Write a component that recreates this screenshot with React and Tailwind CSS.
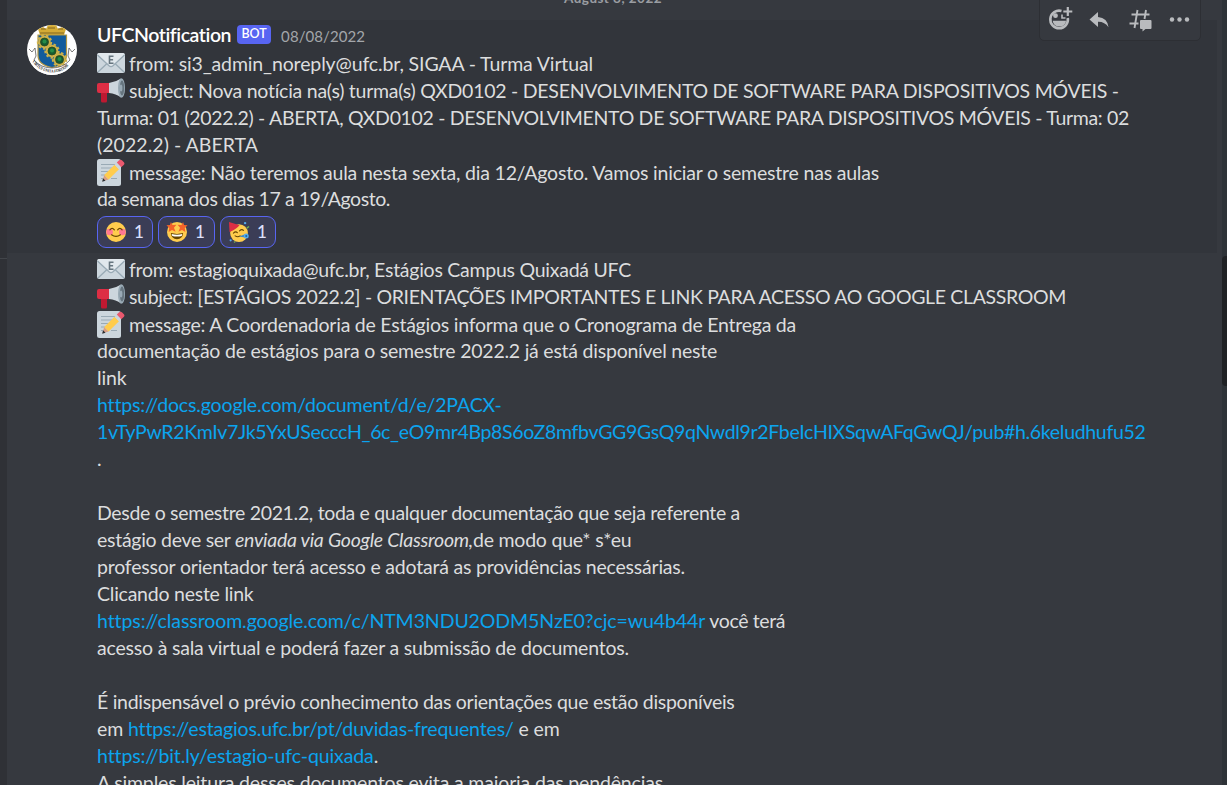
import { useLayoutEffect, useRef } from "react";

/* Text run whose tracking is adjusted so that it spans `w` pixels. */
function T({ w, children, className = "" }) {
  const ref = useRef(null);
  useLayoutEffect(() => {
    const el = ref.current;
    el.style.letterSpacing = "0px";
    const natural = el.getBoundingClientRect().width;
    el.style.letterSpacing = (w - natural) / children.length + "px";
  }, [w, children]);
  return <span ref={ref} className={"inline-block whitespace-pre " + className}>{children}</span>;
}

const Link = ({ w, children }) => (
  <a className="text-[#0ba4ee]"><T w={w}>{children}</T></a>
);

const Line = ({ children }) => <div className="h-[27px] leading-[25px] whitespace-pre flex">{children}</div>;

function Envelope() {
  return (
    <svg viewBox="0 0 28 20" className="w-[28px] h-[20px] mt-[2px] mr-[4px] shrink-0">
      <rect width="28" height="20" rx="2" fill="#ccd6dd" />
      <path d="M1 19 10.500 10M27 19 17.500 10" stroke="#99aab5" strokeWidth="1.300" />
      <path d="M.5 1.500 12 12.500q2 1.700 4 0L27.500 1.500Q27 0 26 0H2Q1 0 .5 1.500Z" fill="#e1e8ed" />
      <path d="M.5 2 12 12.800q2 1.700 4 0L27.500 2" fill="none" stroke="#99aab5" strokeWidth="1.300" />
      <path d="M16.500 3.200h-4v7h4M12.500 6.700h3.600" fill="none" stroke="#66757f" strokeWidth="1.600" />
    </svg>
  );
}

function Megaphone() {
  return (
    <svg viewBox="0 0 28 25" className="w-[28px] h-[25px] mr-[4px] shrink-0">
      <path d="M4 13h6v10q0 1.500-1.500 1.500h-3Q4 24.500 4 23Z" fill="#be1931" />
      <path d="M2 5h11v10H2q-2 0-2-2V7q0-2 2-2Z" fill="#dd2e44" />
      <path d="M12 5Q19 4 24 .5v19Q19 15.500 12 15Z" fill="#ccd6dd" />
      <ellipse cx="24.500" cy="10" rx="3.500" ry="9.800" fill="#99aab5" />
      <ellipse cx="25" cy="10" rx="2.200" ry="7.500" fill="#66757f" />
      <ellipse cx="24" cy="10" rx="1.400" ry="3.500" fill="#99aab5" />
    </svg>
  );
}

function Memo() {
  return (
    <svg viewBox="0 0 28 27" className="w-[28px] h-[27px] mr-[4px] shrink-0">
      <rect y="0" width="24" height="27" rx="2.500" fill="#ccd6dd" />
      <path d="M4 5.500h15M4 9h12M4 12.500h8M4 16h4M4 19.500h2M14 19.500h6" stroke="#99aab5" strokeWidth="1.200" />
      <path d="m5.500 22.300 1.700-6.400 4.400 4.600Z" fill="#d99e82" />
      <path d="m7.200 15.900 10.400-10.200 4.400 4.600-10.400 10.200Z" fill="#ffcc4d" />
      <path d="m17.600 5.700 2.200-2.100 4.400 4.600-2.200 2.100Z" fill="#ccd6dd" />
      <path d="m19.800 3.600 2.300-2.300q1.300-1.300 2.800 0l2 2q1.200 1.400-.2 2.700l-2.500 2.200Z" fill="#ea596e" />
      <path d="m5.200 22.700.9-3.500 2.400 2.500Z" fill="#292f33" />
    </svg>
  );
}

function Smile() {
  return (
    <svg viewBox="0 0 36 36" className="size-[20px]">
      <circle cx="18" cy="18" r="18" fill="#ffcc4d" />
      <circle cx="6.500" cy="18" r="6" fill="#ff7892" />
      <circle cx="29.500" cy="18" r="6" fill="#ff7892" />
      <path d="M7 14q4-5 8 0M21 14q4-5 8 0M10 23q8 6 16 0" fill="none" stroke="#664500" strokeWidth="2.200" strokeLinecap="round" />
    </svg>
  );
}

function StarEyes() {
  return (
    <svg viewBox="0 0 36 36" className="size-[20px] overflow-visible">
      <circle cx="18" cy="18" r="18" fill="#ffcc4d" />
      <path d="M7 20q11 3 22 0-1 11-11 11T7 20Z" fill="#664500" />
      <path d="M8.500 21.500q9.500 2.500 19 0l-1 3.500q-8.500 2-17 0Z" fill="#fff" />
      <path d="m7 0 3 5.500 7-.5-4.500 5.500 3 7L9 14.500 3 18l1-7-5-5 6.500-.5ZM29 0l-3 5.500-7-.5 4.500 5.500-3 7 6.500-3 6 3.500-1-7 5-5-6.500-.5Z" fill="#f4632a" />
    </svg>
  );
}

function Party() {
  return (
    <svg viewBox="0 0 36 36" className="size-[20px] overflow-visible">
      <circle cx="18" cy="20" r="16" fill="#ffcc4d" />
      <path d="M0 0 19 6Q14 13 1 18Z" fill="#dd2e44" />
      <path d="M8 20q4-4 7-1M19 16q4-4 7-1M11 25q5 3 9 0" fill="none" stroke="#664500" strokeWidth="2" strokeLinecap="round" />
      <path d="m18 26 11-4v6Z" fill="#3b88c3" />
      <circle cx="31" cy="25" r="4.500" fill="#55acee" />
      <circle cx="31" cy="25" r="1.800" fill="#269" />
      <circle cx="29" cy="2" r="2.200" fill="#55acee" />
      <path d="m32 11 4-3" stroke="#77b255" strokeWidth="2.500" />
      <circle cx="3" cy="33" r="2" fill="#55acee" />
      <circle cx="10" cy="36" r="1.500" fill="#77b255" />
    </svg>
  );
}

const Reaction = ({ children, className }) => (
  <div className={"h-[32px] box-border border border-[#5865f2] rounded-[9px] bg-[#3b3d56] flex items-center pl-[8px] text-[17px] text-[#dee0fc] font-medium " + className}>
    {children}<span className="ml-[8px]">1</span>
  </div>
);

function Crest() {
  return (
    <svg viewBox="0 0 50 50" className="w-[50px] h-[50px] shrink-0">
      <defs><clipPath id="disc"><circle cx="25" cy="25" r="25" /></clipPath></defs>
      <g clipPath="url(#disc)">
        <rect width="50" height="50" fill="#fefefe" />
        <path d="M13 10 11 4l5-2 3 2 2-4h8l2 4 4-2 4 2-2 6Z" fill="#d4ab35" />
        <path d="M14 4h5M21 3h7M31 4h5M13 8h24" stroke="#806421" strokeWidth="1" />
        <path d="M11 10h28.500V30q0 10-14.500 12.500Q11 40 11 30Z" fill="#125b9c" stroke="#b29745" strokeWidth="1.200" />
        <g fill="#cdb14a"><circle cx="17.500" cy="17" r="6.200" /><circle cx="25" cy="26" r="6.200" /><circle cx="32.500" cy="34.500" r="6.200" /></g>
        <g fill="none" stroke="#cdb14a" strokeWidth="2" strokeDasharray="2.500 2.200"><circle cx="17.500" cy="17" r="6.700" /><circle cx="25" cy="26" r="6.700" /><circle cx="32.500" cy="34.500" r="6.700" /></g>
        <g fill="#165c31" stroke="#284721" strokeWidth=".8"><circle cx="17.500" cy="17" r="4" /><circle cx="25" cy="26" r="4" /><circle cx="32.500" cy="34.500" r="4" /></g>
        <g fill="#268c47"><circle cx="17.500" cy="16.500" r="2" /><circle cx="25" cy="25.500" r="2" /><circle cx="32.500" cy="34" r="2" /></g>
        <path d="m2 24 3 3 3-4 1 8-2 4q7 8 18 8t18-8l-2-4 1-8 3 4 3-3-1 10 3 4q-8 13-25 13T0 38l3-4Z" fill="#fff" />
        <path d="m2 24 3 3 3-4 1 8-2 4q7 8 18 8t18-8l-2-4 1-8 3 4 3-3" fill="none" stroke="#444" strokeWidth=".7" />
        <path id="motto" d="M5 36.500Q13 47 25 47.500T45 36.500" fill="none" />
        <text fontSize="4.400" fontFamily="Liberation Serif, serif" fontWeight="bold" fill="#222"><textPath href="#motto" textLength="42" lengthAdjust="spacingAndGlyphs">VIRTUS UNITA FORTIOR</textPath></text>
      </g>
    </svg>
  );
}

function Toolbar() {
  return (
    <div className="absolute left-[1039px] -top-px w-[162px] h-[42px] rounded-b-[5px] border border-[#2d2f34] bg-[#36393f] text-[#b9bbbe]">
      <svg viewBox="0 0 160 40" className="w-[160px] h-[40px]" fill="none" stroke="currentColor">
        <path d="M21.500 11A8.800 8.800 0 1 0 27.800 18" strokeWidth="2.600" />
        <path d="M12.700 20.800h13.400q-.7 5.800-6.700 5.800t-6.700-5.800Z" fill="currentColor" stroke="none" />
        <circle cx="15.500" cy="15.700" r="2.400" fill="currentColor" stroke="none" />
        <path d="M22 14.500v3.500h3.500" strokeWidth="1.600" />
        <path d="M27.800 7v9M23.300 11.500h9" strokeWidth="2.200" />
        <path d="M58 17V12l-8.500 7.500 8.500 7.500v-5.200q6.700-.2 10.500 5.500-1-9.500-10.500-10.300Z" fill="currentColor" stroke="none" />
        <path d="M91.500 14.500h18M89.500 23.500h9M97.500 10l-3 18M106 10l-1.500 9" strokeWidth="1.900" />
        <path d="M101 20h9.500q1 0 1 1v7q0 1-1 1h-5l-3 2.500V29h-1.500q-1 0-1-1v-7q0-1 1-1Z" fill="currentColor" stroke="none" />
        <g fill="currentColor" stroke="none"><circle cx="132" cy="19.500" r="2.200" /><circle cx="139.500" cy="19.500" r="2.200" /><circle cx="147" cy="19.500" r="2.200" /></g>
      </svg>
    </div>
  );
}

export default function App() {
  return (
    <div className="relative w-[1227px] h-[785px] overflow-hidden flex bg-[#36393f] text-[#dcddde] text-[19.5px] font-['Lato',sans-serif]">
      <div className="w-[7px] shrink-0 bg-[#2f3136] pt-[258px]"><div className="h-px bg-[#42454a]" /></div>
      <main className="w-[1215px] shrink-0 flex flex-col">
        <div className="h-[20px] relative shrink-0">
          <div className="absolute left-[557px] -top-[11px] text-[13.5px] leading-[18px] font-bold text-[#9a9da2]"><T w={98}>August 8, 2022</T></div>
        </div>
        <section className="h-[233px] w-[1210px] shrink-0 bg-[#32353b] flex pl-[20px] pt-[5px]">
          <Crest />
          <div className="ml-[20px]">
            <div className="flex items-center h-[26px] -mt-[3px] mb-[3px]">
              <T w={134.500} className="font-semibold text-white leading-[27px] -mt-px">UFCNotification</T>
              <span className="ml-[6px] w-[34px] h-[19px] -mt-px rounded-[4px] bg-[#5865f2] text-white text-[12.5px] leading-[18px] font-semibold text-center">BOT</span>
              <span className="ml-[10px] mt-[3px] text-[15px] text-[#a3a6aa]"><T w={84}>08/08/2022</T></span>
            </div>
            <Line><Envelope /><T w={464}>from: si3_admin_noreply@ufc.br, SIGAA - Turma Virtual</T></Line>
            <Line><Megaphone /><T w={990}>subject: Nova notícia na(s) turma(s) QXD0102 - DESENVOLVIMENTO DE SOFTWARE PARA DISPOSITIVOS MÓVEIS -</T></Line>
            <Line><T w={1032}>Turma: 01 (2022.2) - ABERTA, QXD0102 - DESENVOLVIMENTO DE SOFTWARE PARA DISPOSITIVOS MÓVEIS - Turma: 02</T></Line>
            <Line><T w={161}>(2022.2) - ABERTA</T></Line>
            <Line><Memo /><T w={750} className="pt-px">message: Não teremos aula nesta sexta, dia 12/Agosto. Vamos iniciar o semestre nas aulas</T></Line>
            <Line><T w={293}>da semana dos dias 17 a 19/Agosto.</T></Line>
            <div className="flex mt-[3px]">
              <Reaction className="w-[56px]"><Smile /></Reaction>
              <Reaction className="w-[57px] ml-[5px]"><StarEyes /></Reaction>
              <Reaction className="w-[56px] ml-[5px]"><Party /></Reaction>
            </div>
          </div>
        </section>
        <section className="pl-[90px] pt-[4px]">
          <Line><Envelope /><T w={502}>from: estagioquixada@ufc.br, Estágios Campus Quixadá UFC</T></Line>
          <Line><Megaphone /><T w={937}>subject: [ESTÁGIOS 2022.2] - ORIENTAÇÕES IMPORTANTES E LINK PARA ACESSO AO GOOGLE CLASSROOM</T></Line>
          <Line><Memo /><T w={667} className="pt-px">message: A Coordenadoria de Estágios informa que o Cronograma de Entrega da</T></Line>
          <Line><T w={620}>documentação de estágios para o semestre 2022.2 já está disponível neste</T></Line>
          <Line><T w={29.500}>link</T></Line>
          <Line><Link w={404}>https://docs.google.com/document/d/e/2PACX-</Link></Line>
          <Line><Link w={1048.500}>1vTyPwR2KmIv7Jk5YxUSecccH_6c_eO9mr4Bp8S6oZ8mfbvGG9GsQ9qNwdl9r2FbeIcHIXSqwAFqGwQJ/pub#h.6keludhufu52</Link></Line>
          <Line>.</Line>
          <Line />
          <Line><T w={643}>Desde o semestre 2021.2, toda e qualquer documentação que seja referente a</T></Line>
          <Line><T w={138}>estágio deve ser </T><T w={238} className="italic">enviada via Google Classroom,</T><T w={158.500}>de modo que* s*eu</T></Line>
          <Line><T w={588}>professor orientador terá acesso e adotará as providências necessárias.</T></Line>
          <Line><T w={156.500}>Clicando neste link</T></Line>
          <Line><Link w={607.500}>https://classroom.google.com/c/NTM3NDU2ODM5NzE0?cjc=wu4b44r</Link><T w={80}> você terá</T></Line>
          <Line><T w={532}>acesso à sala virtual e poderá fazer a submissão de documentos.</T></Line>
          <Line />
          <Line><T w={637.500}>É indispensável o prévio conhecimento das orientações que estão disponíveis</T></Line>
          <Line><T w={31}>em </T><Link w={385}>https://estagios.ufc.br/pt/duvidas-frequentes/</Link><T w={46}> e em</T></Line>
          <Line><Link w={276}>https://bit.ly/estagio-ufc-quixada</Link><span>.</span></Line>
          <Line><T w={566}>A simples leitura desses documentos evita a maioria das pendências</T></Line>
        </section>
      </main>
      <div className="w-[5px] shrink-0 bg-[#2e3338] pt-[256px]"><div className="h-[130px] w-[8px] rounded-[4px] bg-[#202225]" /></div>
      <Toolbar />
    </div>
  );
}
